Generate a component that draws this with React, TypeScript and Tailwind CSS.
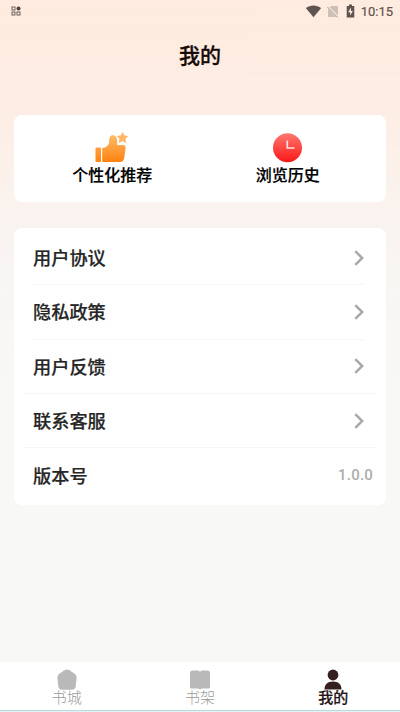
import React from "react";

function StatusBar() {
  return (
    <div className="flex h-[22px] items-center justify-between pl-[11px] pr-[7px] text-[#5f5550]">
      <svg width="10" height="10" viewBox="0 0 10 10" fill="none" stroke="#6b625c" strokeWidth="1">
        <rect x="1" y="1" width="3" height="3" />
        <circle cx="7.5" cy="2.4" r="2" fill="#4b423d" stroke="none" />
        <rect x="1" y="6" width="3" height="3" />
        <rect x="6" y="6" width="3" height="3" />
      </svg>
      <div className="flex items-center">
        <svg className="mr-[5px]" width="17" height="14" viewBox="0 0 17 14">
          <path d="M.8 4.1C5.200.6 11.600.6 16.200 4.100L8.500 13.200Z" fill="#5f5550" />
        </svg>
        <svg className="mr-[7px]" width="12" height="13" viewBox="0 0 12 13">
          <path d="M4 1h7v11H1V4Z" fill="#cdbfb6" />
          <path d="M.5 1.500 11.500 12.500" stroke="#ffece1" strokeWidth="2.200" />
          <path d="M.3 1.800 10.800 12.500" stroke="#a79b93" strokeWidth="1" />
        </svg>
        <svg className="mr-[6px]" width="9" height="14" viewBox="0 0 9 14">
          <path d="M3 .5h3V2h2.300v11.500H.7V2H3Z" fill="#5f5550" />
          <path d="M5 3.500 2.200 8.200h2v3.300L6.900 6.900H5Z" fill="#ffece1" />
        </svg>
        <span className="font-[Roboto] text-[13px] leading-none [-webkit-text-stroke:0.2px_currentColor]">10:15</span>
      </div>
    </div>
  );
}

function ThumbIcon() {
  return (
    <svg width="34" height="32" viewBox="0 0 34 32">
      <defs>
        <linearGradient id="thumb" x1="0" y1="2" x2="0" y2="31" gradientUnits="userSpaceOnUse">
          <stop offset="0" stopColor="#ffc16f" />
          <stop offset="1" stopColor="#ff8210" />
        </linearGradient>
      </defs>
      <rect x=".5" y="16.500" width="5.500" height="14.500" rx="1" fill="url(#thumb)" />
      <path
        d="M7.200 17c3.800-.5 7-2.500 7-6.800 0-3.500.8-6 3.700-6s4.300 2.500 4.300 5.700V14h5.500c2.300 0 3.200 1.400 2.900 3.500l-1.500 9.800c-.4 2.400-1.700 3.700-4.200 3.700H8.700c-1 0-1.500-.5-1.500-1.500Z"
        fill="url(#thumb)"
      />
      <path
        d="m27.600 1.500 1.500 3.300 3.600.5-2.600 2.600.6 3.600-3.200-1.700-3.200 1.700.6-3.600-2.600-2.600 3.600-.5Z"
        fill="#ffb76b"
        stroke="#ffb76b"
        strokeWidth=".8"
        strokeLinejoin="round"
      />
    </svg>
  );
}

function ClockIcon() {
  return (
    <svg width="30" height="32" viewBox="0 0 30 32">
      <defs>
        <linearGradient id="clock" x1="0" y1="0" x2="0" y2="1">
          <stop offset="0" stopColor="#ff7770" />
          <stop offset="1" stopColor="#fa1717" />
        </linearGradient>
      </defs>
      <circle cx="14.500" cy="16.800" r="14.500" fill="url(#clock)" />
      <path d="M14.300 9.500v7.500h7.200" fill="none" stroke="#ffe3dc" strokeWidth="1.700" />
    </svg>
  );
}

function Feature({ label, icon }: { label: string; icon: React.ReactNode }) {
  return (
    <div className="flex w-[175.500px] flex-col items-center">
      {icon}
      <span className="-mt-px text-[16px] font-medium leading-6 text-black [-webkit-text-stroke:0.2px_currentColor]">
        {label}
      </span>
    </div>
  );
}

const rows = [
  { label: "用户协议", line: "ml-5 mr-[22px]" },
  { label: "隐私政策", line: "ml-5 mr-[22px]" },
  { label: "用户反馈", line: "mx-2.5" },
  { label: "联系客服", line: "mx-2.5" },
  { label: "版本号", value: "1.0.0" },
];

function MenuRow({ label, line, value }: { label: string; line?: string; value?: string }) {
  return (
    <div className="flex h-[54.300px] flex-col">
      <div className={`flex flex-1 items-center justify-between pl-[19px] ${value ? "pr-[13px]" : "pr-[22px]"}`}>
        <span className="-mt-px text-[18.200px] font-medium leading-7 text-[#262626] [-webkit-text-stroke:0.2px_currentColor]">
          {label}
        </span>
        {value ? (
          <span className="font-[Roboto] text-[15px] font-medium tracking-[0.2px] text-[#adadad]">{value}</span>
        ) : (
          <svg width="10" height="16" viewBox="0 0 10 16" fill="none" stroke="#a9a9a9" strokeWidth="2.500">
            <path d="m1.300 1.200 6.900 6.800-6.900 6.800" />
          </svg>
        )}
      </div>
      {line && <div className={`h-px shrink-0 bg-[#f6f6f6] ${line}`} />}
    </div>
  );
}

function NavItem({ label, icon, active }: { label: string; icon: React.ReactNode; active?: boolean }) {
  return (
    <div className="flex flex-1 flex-col items-center pt-[7px]">
      <svg className="shrink-0" width="22" height="21" viewBox="0 0 22 21">
        {icon}
      </svg>
      <span
        className={`-mt-[3px] text-[15px] leading-5 ${
          active ? "font-medium text-[#241416] [-webkit-text-stroke:0.2px_currentColor]" : "font-light text-[#9b9b9b]"
        }`}
      >
        {label}
      </span>
    </div>
  );
}

export default function App() {
  return (
    <div className="flex h-[712px] w-[400px] flex-col overflow-hidden bg-[#f8f8f7] bg-[linear-gradient(180deg,#ffebdf_0px,#fdede3_100px,#faf3ef_210px,#f8f7f6_330px,#f8f8f7_400px)] font-['Noto_Sans_CJK_SC',sans-serif]">
      <StatusBar />
      <header className="flex h-[66px] items-center justify-center pb-[2px]">
        <h1 className="text-[21px] font-medium leading-8 text-[#160b08] [-webkit-text-stroke:0.3px_currentColor]">我的</h1>
      </header>
      <main className="flex flex-1 flex-col gap-[26px] px-3.5 pt-[27px]">
        <section className="flex h-[87px] justify-center rounded-lg bg-white pt-4">
          <Feature label="个性化推荐" icon={<ThumbIcon />} />
          <Feature label="浏览历史" icon={<ClockIcon />} />
        </section>
        <section className="h-[277px] rounded-lg bg-white pt-[3px]">
          {rows.map((r) => (
            <MenuRow key={r.label} {...r} />
          ))}
        </section>
      </main>
      <nav className="flex h-[50px] shrink-0 flex-col bg-white">
        <div className="flex flex-1">
          <NavItem
            label="书城"
            icon={
              <path
                d="M8.600 1.300q2.400-1.400 4.800 0l5.200 3.500q2.200 1.500 2 4l-.9 8.500q-.4 3.400-3.700 3.400H6q-3.300 0-3.700-3.400l-.9-8.500q-.2-2.500 2-4Z"
                fill="#b9b9b9"
              />
            }
          />
          <NavItem
            label="书架"
            icon={
              <path
                d="M1 4Q1 1.500 3.500 1.500H8q2 0 3 1.200 1-1.200 3-1.200h4.500Q21 1.500 21 4v14q0 1.500-1.500 1.500H14q-2 0-3 1-1-1-3-1H2.500Q1 19.500 1 18Z"
                fill="#b9b9b9"
              />
            }
          />
          <NavItem
            active
            label="我的"
            icon={
              <g fill="#34201f">
                <circle cx="11" cy="6" r="5.400" />
                <path d="M2.500 20.500c0-5 2.800-8 8.500-8s8.500 3 8.500 8Z" />
              </g>
            }
          />
        </div>
        <div className="h-px bg-[#b9dcde]" />
        <div className="h-px bg-[#e3f2f3]" />
      </nav>
    </div>
  );
}
